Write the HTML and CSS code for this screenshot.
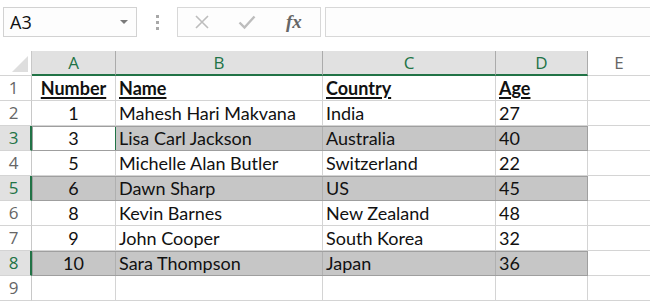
FILE: index.html
```html
<!DOCTYPE html>
<html>
<head>
<meta charset="utf-8">
<link rel="stylesheet" href="styles.css">
</head>
<body>
<div class="toolbar">
  <div class="namebox"><span class="ref">A3</span><span class="caret"></span></div>
  <div class="grip"><i></i><i></i><i></i></div>
  <div class="btns">
    <svg class="ico" width="16" height="16" viewBox="0 0 16 16"><path d="M2 2 L14 14 M14 2 L2 14" stroke="#bdbdbd" stroke-width="1.6" fill="none"/></svg>
    <svg class="ico" width="18" height="16" viewBox="0 0 18 16"><path d="M1.5 8.5 L6.5 13.5 L16.5 2.5" stroke="#bdbdbd" stroke-width="2.4" fill="none"/></svg>
    <span class="fx">fx</span>
  </div>
  <div class="formula"></div>
</div>
<div class="sheet">
  <div class="row head">
    <div class="corner"><span class="tri"></span></div>
    <div class="ch a sel">A</div>
    <div class="ch b sel">B</div>
    <div class="ch c sel">C</div>
    <div class="ch d sel">D</div>
    <div class="ch e">E</div>
  </div>
  <div class="row">
    <div class="rh">1</div>
    <div class="cell a center bold">Number</div>
    <div class="cell b bold">Name</div>
    <div class="cell c bold">Country</div>
    <div class="cell d bold">Age</div>
    <div class="cell e"></div>
  </div>
  <div class="row">
    <div class="rh">2</div>
    <div class="cell a center">1</div>
    <div class="cell b">Mahesh Hari Makvana</div>
    <div class="cell c">India</div>
    <div class="cell d">27</div>
    <div class="cell e"></div>
  </div>
  <div class="row">
    <div class="rh on">3</div>
    <div class="range">
      <div class="cell a center active">3</div>
      <div class="cell b">Lisa Carl Jackson</div>
      <div class="cell c">Australia</div>
      <div class="cell d">40</div>
    </div>
    <div class="cell e"></div>
  </div>
  <div class="row">
    <div class="rh">4</div>
    <div class="cell a center">5</div>
    <div class="cell b">Michelle Alan Butler</div>
    <div class="cell c">Switzerland</div>
    <div class="cell d">22</div>
    <div class="cell e"></div>
  </div>
  <div class="row">
    <div class="rh on">5</div>
    <div class="range">
      <div class="cell a center">6</div>
      <div class="cell b">Dawn Sharp</div>
      <div class="cell c">US</div>
      <div class="cell d">45</div>
    </div>
    <div class="cell e"></div>
  </div>
  <div class="row">
    <div class="rh">6</div>
    <div class="cell a center">8</div>
    <div class="cell b">Kevin Barnes</div>
    <div class="cell c">New Zealand</div>
    <div class="cell d">48</div>
    <div class="cell e"></div>
  </div>
  <div class="row">
    <div class="rh">7</div>
    <div class="cell a center">9</div>
    <div class="cell b">John Cooper</div>
    <div class="cell c">South Korea</div>
    <div class="cell d">32</div>
    <div class="cell e"></div>
  </div>
  <div class="row">
    <div class="rh on">8</div>
    <div class="range">
      <div class="cell a center">10</div>
      <div class="cell b">Sara Thompson</div>
      <div class="cell c">Japan</div>
      <div class="cell d">36</div>
    </div>
    <div class="cell e"></div>
  </div>
  <div class="row">
    <div class="rh">9</div>
    <div class="cell a"></div>
    <div class="cell b"></div>
    <div class="cell c"></div>
    <div class="cell d"></div>
    <div class="cell e"></div>
  </div>
</div>
</body>
</html>
```

FILE: styles.css
```css
* { box-sizing: border-box; }
html, body {
  margin: 0;
  padding: 0;
  background: #ffffff;
  overflow: hidden;
}
body {
  width: 650px;
  height: 303px;
  font-family: Lato, "Liberation Sans", sans-serif;
}

/* ---------- formula bar ---------- */
.toolbar {
  height: 51px;
  display: flex;
  align-items: flex-start;
  padding: 7px 0 0 3px;
}
.namebox {
  width: 134px;
  height: 30px;
  border: 1px solid #d2d2d2;
  background: #fdfdfd;
  display: flex;
  align-items: center;
  justify-content: space-between;
  padding: 0 8px 0 6px;
}
.ref {
  font-family: "Open Sans", "DejaVu Sans", sans-serif;
  font-size: 18px;
  color: #111;
}
.caret {
  width: 0;
  height: 0;
  border-left: 4px solid transparent;
  border-right: 4px solid transparent;
  border-top: 4px solid #7a7a7a;
}
.grip {
  width: 40px;
  height: 30px;
  display: flex;
  flex-direction: column;
  align-items: center;
  justify-content: center;
  gap: 3px;
}
.grip i {
  width: 3px;
  height: 3px;
  background: #a8a8a8;
  display: block;
}
.btns {
  width: 144px;
  height: 30px;
  border: 1px solid #d8d8d8;
  background: #fdfdfd;
  display: flex;
  align-items: center;
  padding: 0 0 0 16px;
  gap: 28px;
}
.ico { display: block; }
.fx {
  font-family: "Liberation Serif", "DejaVu Serif", serif;
  font-style: italic;
  font-weight: bold;
  font-size: 19px;
  color: #666;
  margin-left: 2px;
}
.formula {
  flex: 1;
  height: 30px;
  margin-left: 4px;
  border: 1px solid #d8d8d8;
  border-right: none;
  background: #fdfdfd;
}

/* ---------- sheet ---------- */
.sheet {
  display: flex;
  flex-direction: column;
}
.row {
  display: flex;
  height: 25px;
  flex: none;
}
.range {
  display: flex;
  background: #c6c6c6;
  outline: 1px solid #9f9f9f;
  outline-offset: -1px;
  position: relative;
}
.a { width: 84px; }
.b { width: 207px; }
.c { width: 173px; }
.d { width: 92px; }
.e { flex: 1; }

.corner {
  width: 32px;
  height: 25px;
  border-right: 1px solid #c8c8c8;
  border-bottom: 1px solid #d4d4d4;
  position: relative;
}
.tri {
  position: absolute;
  right: 3px;
  bottom: 3px;
  width: 0;
  height: 0;
  border-left: 16px solid transparent;
  border-bottom: 16px solid #dedede;
}
.ch {
  height: 25px;
  border-right: 1px solid #c8c8c8;
  border-bottom: 1px solid #d4d4d4;
  font-family: "Open Sans", "DejaVu Sans", sans-serif;
  font-size: 17px;
  line-height: 24px;
  text-align: center;
  color: #666;
  background: #fff;
}
.ch.sel {
  background: #e1e1e1;
  color: #217346;
  border-bottom: 2px solid #217346;
  border-right-color: #ababab;
}
.ch.e { border-right: none; }

.rh {
  width: 32px;
  height: 25px;
  border-right: 1px solid #c8c8c8;
  border-bottom: 1px solid #d4d4d4;
  font-family: "Open Sans", "DejaVu Sans", sans-serif;
  font-size: 17px;
  line-height: 24px;
  text-align: center;
  color: #666;
  padding-right: 4px;
}
.rh.on {
  background: #e1e1e1;
  color: #217346;
  border-right: 2px solid #217346;
  padding-right: 3px;
}

.cell {
  height: 25px;
  border-right: 1px solid #d4d4d4;
  border-bottom: 1px solid #d4d4d4;
  font-size: 18px;
  line-height: 25px;
  color: #111;
  padding: 0 3px;
  white-space: nowrap;
  overflow: hidden;
}
.range .cell {
  border-right-color: #b0b0b0;
  border-bottom-color: #b0b0b0;
}
.cell.e { border-right: none; }
.center { text-align: center; }
.bold {
  font-weight: bold;
  text-decoration: underline;
  text-decoration-thickness: 1.5px;
  text-underline-offset: 2px;
}
.cell.active {
  background: #ffffff;
  outline: 1px solid #217346;
  outline-offset: -1px;
}
```
